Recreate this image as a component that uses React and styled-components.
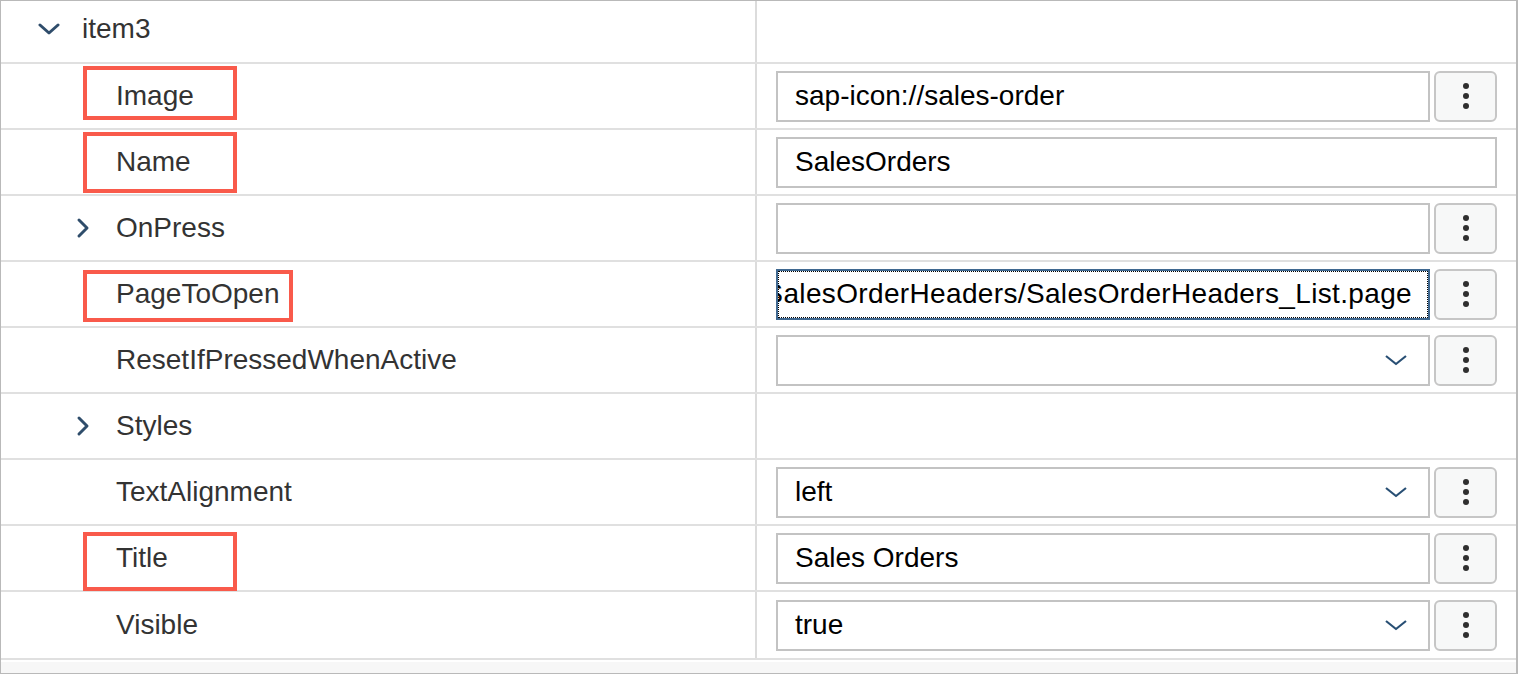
import React from "react";
import styled, { createGlobalStyle, css } from "styled-components";

const Global = createGlobalStyle`
  html, body { margin: 0; padding: 0; background: #fff; }
  body { font-family: "Liberation Sans", Arial, sans-serif; }
`;

const Frame = styled.div`
  box-sizing: border-box;
  width: 1518px;
  height: 674px;
  border: 1px solid #b9b9b9;
  border-right-width: 2px;
  display: flex;
  flex-direction: column;
  overflow: hidden;
`;

const Row = styled.div`
  display: grid;
  grid-template-columns: 756px minmax(0, 1fr);
  height: ${(p) => p.$h}px;
  border-bottom: 2px solid #e0e0e0;
  flex: none;
`;

const LabelCell = styled.div`
  box-sizing: border-box;
  border-right: 2px solid #dcdcdc;
  display: flex;
  align-items: center;
  padding-left: ${(p) => 30 + p.$level * 34}px;
  padding-bottom: ${(p) => (p.$lift ? 6 : 0)}px;
`;

const ToggleSlot = styled.span`
  width: 52px;
  flex: none;
  display: flex;
  align-items: center;
`;

const Chevron = styled.svg`
  margin-left: 7px;
  display: block;
`;

const LabelText = styled.span`
  position: relative;
  font-size: 28px;
  line-height: 32px;
  color: #333;
  white-space: nowrap;
  margin-left: -1px;
`;

const Highlight = styled.span`
  position: absolute;
  box-sizing: border-box;
  left: -33px;
  top: ${(p) => p.$top}px;
  width: ${(p) => p.$w}px;
  height: ${(p) => p.$h}px;
  border: 4px solid #f95a4b;
  pointer-events: none;
`;

const ValueCell = styled.div`
  min-width: 0;
  display: flex;
  align-items: center;
  gap: 4px;
  padding: 0 19px;
`;

const fieldBase = css`
  box-sizing: border-box;
  flex: 1;
  min-width: 0;
  height: 51px;
  border: 2px solid #c3c3c3;
  background: #fff;
  display: flex;
  align-items: center;
  overflow: hidden;
  font-size: 28px;
  color: #000;
  white-space: nowrap;
`;

const Field = styled.div`
  ${fieldBase}
  padding: 0 16px 0 17px;
  justify-content: ${(p) => (p.$focused ? "flex-end" : "flex-start")};
  ${(p) =>
    p.$focused &&
    css`
      border-color: #3f6890;
      outline: 1px dotted #000;
      outline-offset: -3px;
      letter-spacing: 0.35px;
    `}
`;

const FieldText = styled.span`
  flex: none;
  line-height: 32px;
`;

const Select = styled.div`
  ${fieldBase}
  justify-content: space-between;
  padding: 0 21px 0 17px;
`;

const MenuButton = styled.div`
  box-sizing: border-box;
  width: 63px;
  height: 51px;
  flex: none;
  border: 2px solid #c6c6c6;
  border-radius: 6px;
  background: #f7f8f8;
  display: flex;
  flex-direction: column;
  align-items: center;
  justify-content: center;
  gap: 4px;
`;

const Dot = styled.span`
  width: 6px;
  height: 6px;
  border-radius: 50%;
  background: #2f2f2f;
`;

const Footer = styled.div`
  flex: 1;
  background: #f7f7f7;
  border-top: 2px solid #fff;
`;

const ChevronDown = () => (
  <Chevron width="22" height="14" viewBox="0 0 22 14">
    <polyline
      points="2,3 11,11 20,3"
      fill="none"
      stroke="#2f4d6b"
      strokeWidth="3"
      strokeLinecap="round"
      strokeLinejoin="round"
    />
  </Chevron>
);

const ChevronRight = () => (
  <Chevron width="22" height="22" viewBox="0 0 22 22">
    <polyline
      points="7,3 15,11 7,19"
      fill="none"
      stroke="#2f4d6b"
      strokeWidth="3"
      strokeLinecap="round"
      strokeLinejoin="round"
    />
  </Chevron>
);

const SelectChevron = () => (
  <svg width="22" height="12" viewBox="0 0 22 12" style={{ flex: "none" }}>
    <polyline
      points="1,2 11,10 21,2"
      fill="none"
      stroke="#284f74"
      strokeWidth="2.2"
      strokeLinejoin="round"
    />
  </svg>
);

const Menu = () => (
  <MenuButton>
    <Dot />
    <Dot />
    <Dot />
  </MenuButton>
);

const rows = [
  { label: "item3", level: 0, toggle: "down", h: 61, lift: true },
  {
    label: "Image",
    level: 1,
    kind: "input",
    value: "sap-icon://sales-order",
    menu: true,
    hl: { top: -14.5, h: 54, w: 154 },
  },
  {
    label: "Name",
    level: 1,
    kind: "input",
    value: "SalesOrders",
    menu: false,
    hl: { top: -14.5, h: 61, w: 154 },
  },
  { label: "OnPress", level: 1, toggle: "right", kind: "input", value: "", menu: true },
  {
    label: "PageToOpen",
    level: 1,
    kind: "input",
    value: "SalesOrderHeaders/SalesOrderHeaders_List.page",
    focused: true,
    menu: true,
    hl: { top: -8.5, h: 52, w: 210 },
  },
  { label: "ResetIfPressedWhenActive", level: 1, kind: "select", value: "", menu: true },
  { label: "Styles", level: 1, toggle: "right" },
  { label: "TextAlignment", level: 1, kind: "select", value: "left", menu: true },
  {
    label: "Title",
    level: 1,
    kind: "input",
    value: "Sales Orders",
    menu: true,
    hl: { top: -10.5, h: 59, w: 154 },
  },
  { label: "Visible", level: 1, kind: "select", value: "true", menu: true, h: 66 },
];

export default function App() {
  return (
    <>
      <Global />
      <Frame>
        {rows.map((r) => (
          <Row key={r.label} $h={r.h || 64}>
            <LabelCell $level={r.level} $lift={r.lift}>
              <ToggleSlot>
                {r.toggle === "down" && <ChevronDown />}
                {r.toggle === "right" && <ChevronRight />}
              </ToggleSlot>
              <LabelText>
                {r.label}
                {r.hl && <Highlight $top={r.hl.top} $h={r.hl.h} $w={r.hl.w} />}
              </LabelText>
            </LabelCell>
            <ValueCell>
              {r.kind === "input" && (
                <Field $focused={r.focused}>
                  <FieldText>{r.value}</FieldText>
                </Field>
              )}
              {r.kind === "select" && (
                <Select>
                  <FieldText>{r.value}</FieldText>
                  <SelectChevron />
                </Select>
              )}
              {r.menu && <Menu />}
            </ValueCell>
          </Row>
        ))}
        <Footer />
      </Frame>
    </>
  );
}
